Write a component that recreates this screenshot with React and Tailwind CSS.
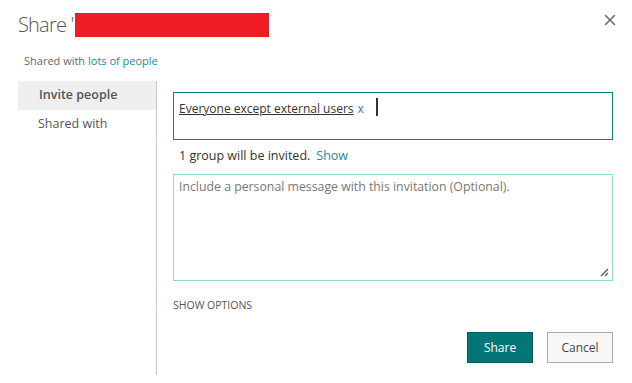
import { X } from "lucide-react";

function ResizeGrip() {
  return (
    <svg viewBox="0 0 10 10" className="absolute bottom-[3px] right-[3px] h-[10px] w-[10px]" aria-hidden="true">
      <path d="M9 2L2 9M9 6L6 9" stroke="#555" strokeWidth="1.3" fill="none" />
    </svg>
  );
}

export default function App() {
  return (
    <div
      className="relative h-[383px] w-[632px] overflow-hidden bg-white text-[#444]"
      style={{ fontFamily: '"Open Sans", "Noto Sans", sans-serif' }}
    >
      <div className="flex items-start justify-between pl-[18px] pr-[13px] pt-[11px]">
        <div className="flex items-center">
          <span className="text-[20px] font-light leading-[28px] tracking-[-0.8px] text-[#555]">Share '</span>
          <span className="ml-[1px] h-[24px] w-[194px] bg-[#ee1c25]" />
        </div>
        <button type="button" className="text-[#666]">
          <X size={18} strokeWidth={2} />
        </button>
      </div>

      <div className="mt-[15px] pl-[24px] text-[11px] leading-[14px] text-[#666]">
        Shared with <span className="text-[#168d9a]">lots of people</span>
      </div>

      <div className="mt-[13px] flex">
        <nav className="ml-[18px] w-[139px] shrink-0 border-r border-[#c8c8c8]">
          <div className="flex h-[29px] items-center bg-[#efefef] pl-[21px] text-[12.5px] font-semibold text-[#555]">
            Invite people
          </div>
          <div className="flex h-[29px] items-center pl-[20px] text-[12.5px] text-[#555]">Shared with</div>
          <div className="h-[236px]" />
        </nav>

        <div className="flex-1 pl-[16px] pr-[19px] pt-[11px]">
          <div className="h-[48px] border border-[#0b8580] px-[5px] pt-[2px] text-[12px] leading-[20px]">
            <span className="text-[#333] underline">Everyone except external users</span>
            <span className="ml-[4px] text-[#168d9a]">x</span>
            <span className="ml-[12px] inline-block h-[18px] w-[2px] translate-y-[3px] bg-[#333]" />
          </div>

          <div className="mt-[8px] pl-[6px] text-[12.5px] leading-[16px] text-[#333]">
            1 group will be invited.
            <span className="ml-[6px] text-[#168d9a]">Show</span>
          </div>

          <div className="relative mt-[10px] h-[107px] border border-[#8fd8d3] px-[5px] pt-[3px] text-[12.3px] leading-[18px] text-[#777]">
            Include a personal message with this invitation (Optional).
            <ResizeGrip />
          </div>

          <div className="mt-[17px] text-[10.5px] leading-[14px] text-[#555]">SHOW OPTIONS</div>

          <div className="mt-[20px] flex justify-end gap-[14px]">
            <button
              type="button"
              className="h-[31px] w-[66px] border border-[#075c5d] bg-[#057677] text-[12px] text-white"
            >
              Share
            </button>
            <button
              type="button"
              className="h-[31px] w-[66px] border border-[#ababab] bg-[#f7f7f7] text-[12px] text-[#444]"
            >
              Cancel
            </button>
          </div>
        </div>
      </div>
    </div>
  );
}
